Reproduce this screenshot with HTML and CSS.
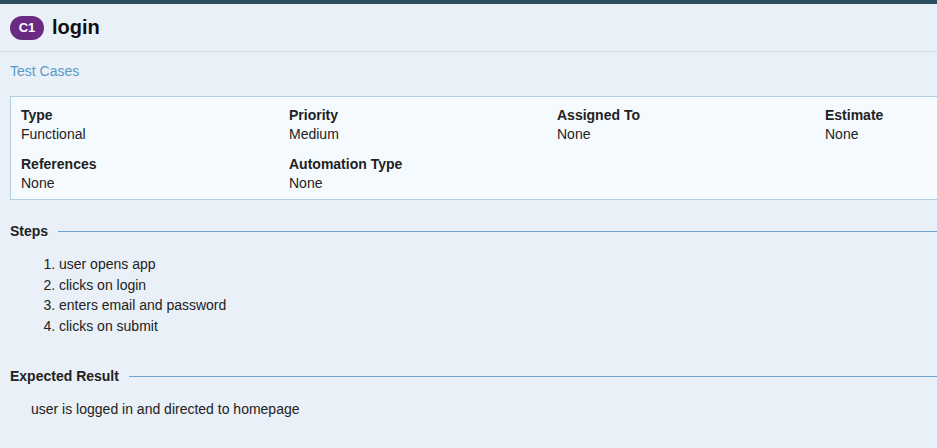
FILE: index.html
```html
<!DOCTYPE html>
<html>
<head>
<meta charset="utf-8">
<link rel="stylesheet" href="styles.css">
</head>
<body>
<div class="topbar"></div>
<div class="header">
  <span class="badge">C1</span>
  <h1 class="title">login</h1>
</div>
<div class="content">
  <a class="crumb" href="#">Test Cases</a>
  <div class="fields">
    <div class="field"><div class="label">Type</div><div class="value">Functional</div></div>
    <div class="field"><div class="label">Priority</div><div class="value">Medium</div></div>
    <div class="field"><div class="label">Assigned To</div><div class="value">None</div></div>
    <div class="field"><div class="label">Estimate</div><div class="value">None</div></div>
    <div class="field"><div class="label">References</div><div class="value">None</div></div>
    <div class="field"><div class="label">Automation Type</div><div class="value">None</div></div>
  </div>
  <div class="section-head"><span>Steps</span><div class="rule"></div></div>
  <ol class="steps">
    <li>user opens app</li>
    <li>clicks on login</li>
    <li>enters email and password</li>
    <li>clicks on submit</li>
  </ol>
  <div class="section-head expected"><span>Expected Result</span><div class="rule"></div></div>
  <p class="result">user is logged in and directed to homepage</p>
</div>
</body>
</html>
```
FILE: styles.css
```css
html, body {
  margin: 0;
  padding: 0;
  background: #e9f0f7;
  overflow: hidden;
  font-family: "Liberation Sans", Arial, sans-serif;
  font-size: 14px;
  color: #222;
}
.topbar {
  height: 4px;
  background: #2c4f60;
}
.header {
  display: flex;
  align-items: center;
  height: 47px;
  padding-left: 10px;
  border-bottom: 1px solid #d3dde6;
}
.badge {
  display: inline-flex;
  align-items: center;
  justify-content: center;
  width: 34px;
  height: 24px;
  border-radius: 12px;
  background: #6a2a82;
  color: #fff;
  font-weight: bold;
  font-size: 13px;
  margin-right: 8px;
}
.title {
  margin: 0;
  font-size: 20px;
  font-weight: bold;
  color: #111;
}
.content {
  padding: 0 0 0 10px;
  overflow: hidden;
}
.crumb {
  display: block;
  margin-top: 11px;
  color: #5b9ac6;
  text-decoration: none;
  line-height: 17px;
}
.fields {
  margin-top: 16px;
  width: 1085px;
  box-sizing: border-box;
  background: #f5faff;
  border: 1px solid #b4cfe2;
  padding: 9px 0 7px 10px;
  display: grid;
  grid-template-columns: 268px 268px 268px 268px;
  row-gap: 12px;
}
.label {
  font-weight: bold;
  line-height: 18px;
}
.value {
  line-height: 18px;
  margin-top: 1px;
}
.section-head {
  display: flex;
  align-items: center;
  margin-top: 23px;
  font-weight: bold;
  line-height: 17px;
}
.section-head .rule {
  flex: 1;
  height: 1px;
  background: #6fa3d0;
  margin-left: 10px;
}
.steps {
  margin: 14px 0 0 0;
  padding-left: 49px;
  line-height: 20.5px;
}
.expected {
  margin-top: 32px;
}
.result {
  margin: 16px 0 0 21px;
  line-height: 17px;
}
```
